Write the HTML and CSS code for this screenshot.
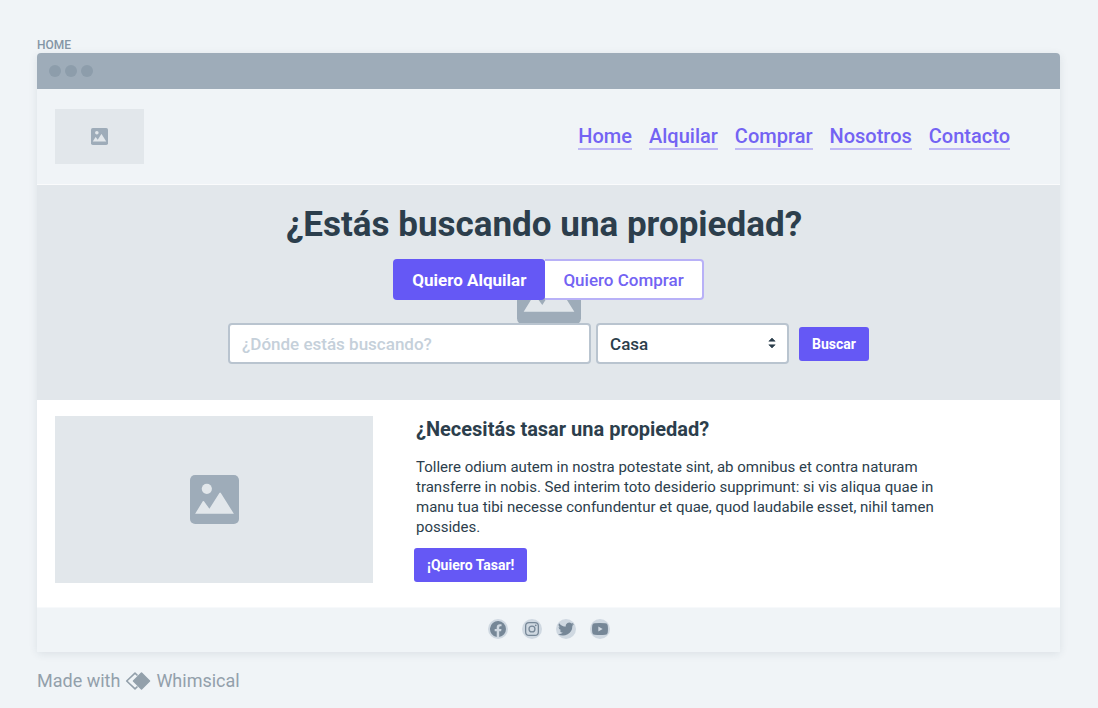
FILE: index.html
```html
<!DOCTYPE html>
<html lang="es">
<head>
<meta charset="utf-8">
<meta name="viewport" content="width=device-width, initial-scale=1">
<title>Home</title>
<link rel="stylesheet" href="styles.css">
</head>
<body>
<svg class="sprite" aria-hidden="true">
  <symbol id="picture" viewBox="0 0 48 48">
    <path fill="#9eacb9" d="M5 0h38a5 5 0 0 1 5 5v38a5 5 0 0 1-5 5H5a5 5 0 0 1-5-5V5a5 5 0 0 1 5-5z"/>
    <circle fill="#e2e7eb" cx="16.500" cy="13.500" r="5"/>
    <path fill="#e2e7eb" d="M5 38l7.500-12.200q.6-.9 1.200 0L19 33l9.800-15.300q.7-1 1.400 0L43 38z"/>
  </symbol>
</svg>
<div class="board">
  <p class="frame-label">HOME</p>
  <div class="browser">
    <div class="titlebar"><span class="dot"></span><span class="dot"></span><span class="dot"></span></div>
    <header class="header">
      <div class="logo"><svg class="logo-icon" aria-hidden="true"><use href="#picture"/></svg></div>
      <nav class="nav">
        <a href="#home">Home</a>
        <a href="#alquilar">Alquilar</a>
        <a href="#comprar">Comprar</a>
        <a href="#nosotros">Nosotros</a>
        <a href="#contacto">Contacto</a>
      </nav>
    </header>
    <main>
      <section class="hero">
        <svg class="hero-icon" aria-hidden="true"><use href="#picture"/></svg>
        <h1 class="hero-title">¿Estás buscando una propiedad?</h1>
        <div class="tabs">
          <button type="button" class="tab tab-active">Quiero Alquilar</button>
          <button type="button" class="tab">Quiero Comprar</button>
        </div>
        <form class="search">
          <input class="field search-input" type="text" placeholder="¿Dónde estás buscando?" aria-label="¿Dónde estás buscando?">
          <div class="select-wrap">
            <select class="field search-select" aria-label="Tipo de propiedad"><option>Casa</option></select>
            <svg class="select-arrows" viewBox="0 0 8 12" aria-hidden="true"><path d="M.8 4.200L4 1l3.200 3.200zM.8 7.800h6.400L4 11z" fill="#2c3e4c" stroke="#2c3e4c" stroke-width=".6" stroke-linejoin="round"/></svg>
          </div>
          <button type="button" class="button">Buscar</button>
        </form>
      </section>
      <section class="appraisal">
        <div class="appraisal-image"><svg class="appraisal-icon" aria-hidden="true"><use href="#picture"/></svg></div>
        <div class="appraisal-body">
          <h2 class="appraisal-title">¿Necesitás tasar una propiedad?</h2>
          <p class="appraisal-text">Tollere odium autem in nostra potestate sint, ab omnibus et contra naturam<br>transferre in nobis. Sed interim toto desiderio supprimunt: si vis aliqua quae in<br>manu tua tibi necesse confundentur et quae, quod laudabile esset, nihil tamen<br>possides.</p>
          <button type="button" class="button">¡Quiero Tasar!</button>
        </div>
      </section>
    </main>
    <footer class="footer">
      <a class="social" href="#facebook" aria-label="Facebook"><svg viewBox="0 0 24 24"><path d="M24 12a12 12 0 1 0-13.900 11.900v-8.400H7V12h3.100V9.400c0-3 1.800-4.700 4.500-4.700 1.300 0 2.700.2 2.700.2v3h-1.500c-1.500 0-2 .9-2 1.900V12h3.400l-.5 3.500h-2.900v8.400A12 12 0 0 0 24 12z"/></svg></a>
      <a class="social" href="#instagram" aria-label="Instagram"><svg class="social-small" viewBox="0 0 24 24"><path fill-rule="evenodd" d="M7 0h10a7 7 0 0 1 7 7v10a7 7 0 0 1-7 7H7a7 7 0 0 1-7-7V7a7 7 0 0 1 7-7zm0 2.200A4.800 4.800 0 0 0 2.200 7v10A4.800 4.800 0 0 0 7 21.800h10a4.800 4.800 0 0 0 4.800-4.800V7A4.800 4.800 0 0 0 17 2.200zM12 5.800a6.200 6.200 0 1 1 0 12.400 6.200 6.200 0 0 1 0-12.400zM12 8a4 4 0 1 0 0 8 4 4 0 0 0 0-8z"/><circle cx="18.400" cy="5.600" r="1.500"/></svg></a>
      <a class="social" href="#twitter" aria-label="Twitter"><svg viewBox="0 0 24 24"><path d="M24 4.600a10 10 0 0 1-2.800.8 5 5 0 0 0 2.100-2.700 10 10 0 0 1-3.100 1.200 4.900 4.900 0 0 0-8.400 4.500A14 14 0 0 1 1.700 3.200a4.900 4.900 0 0 0 1.500 6.500 5 5 0 0 1-2.200-.6 4.900 4.900 0 0 0 3.900 4.900 5 5 0 0 1-2.200.1 4.900 4.900 0 0 0 4.600 3.400A9.900 9.900 0 0 1 0 19.500a14 14 0 0 0 21.500-12.400A10 10 0 0 0 24 4.600z"/></svg></a>
      <a class="social" href="#youtube" aria-label="YouTube"><svg viewBox="0 0 24 24"><path fill-rule="evenodd" d="M4 3.500q8-.8 16 0a3.600 3.600 0 0 1 3.600 3.300q.7 5.200 0 10.400A3.600 3.600 0 0 1 20 20.500q-8 .8-16 0a3.600 3.600 0 0 1-3.600-3.300q-.7-5.200 0-10.400A3.600 3.600 0 0 1 4 3.500zM9.500 8.200v7.600L16 12z"/></svg></a>
    </footer>
  </div>
  <p class="credit">Made with
    <svg class="credit-mark" viewBox="0 0 26 18" aria-hidden="true"><path d="M12.500 3.500L10 1.200 1.700 9l8.300 7.800 2.500-2.300" fill="none" stroke="#93a0ab" stroke-width="1.600" stroke-linejoin="round"/><path d="M16.500 1l8 8-8 8-8-8z" fill="#93a0ab" stroke="#93a0ab" stroke-width="1.500" stroke-linejoin="round"/></svg>
    Whimsical</p>
</div>
</body>
</html>
```
FILE: styles.css
```css
* { box-sizing: border-box; }
body {
  margin: 0;
  background: #f0f4f7;
  color: #2c3e4c;
  font-family: Roboto, "Liberation Sans", sans-serif;
}
h1, h2, p { margin: 0; }
button, input, select { font-family: inherit; }
.sprite { display: none; }
.board { padding: 37px 38px 16px 37px; }
.frame-label {
  font-size: 12px;
  line-height: 16px;
  font-weight: 500;
  color: #8496a5;
}
.browser {
  border-radius: 4px;
  box-shadow: 0 2px 8px rgba(44, 62, 76, 0.1);
}
.titlebar {
  display: flex;
  align-items: center;
  gap: 4px;
  height: 36px;
  padding: 0 12px;
  border-radius: 4px 4px 0 0;
  background: #9eacb9;
}
.dot {
  width: 12px;
  height: 12px;
  border-radius: 50%;
  background: #8d9dab;
}
.header {
  display: flex;
  justify-content: space-between;
  align-items: center;
  padding: 20px 50px 20px 18px;
  background: #f0f4f7;
  border-bottom: 1px solid #fafbfc;
}
.logo {
  display: grid;
  place-items: center;
  width: 89px;
  height: 55px;
  background: #e2e7eb;
}
.logo-icon { width: 17px; height: 17px; }
.nav { display: flex; gap: 17px; }
.nav a {
  font-size: 20px;
  line-height: 24px;
  font-weight: 500;
  color: #7363f3;
  text-decoration: none;
  border-bottom: 2px solid #bfb9f5;
}
.hero {
  position: relative;
  display: flex;
  flex-direction: column;
  align-items: center;
  padding: 18px 0 36px;
  background: #e2e7eb;
}
.hero-icon {
  position: absolute;
  left: 50%;
  top: 50%;
  width: 64px;
  height: 64px;
  margin: -32px;
}
.hero-title {
  position: relative;
  padding-right: 9px;
  font-size: 35px;
  line-height: 44px;
  font-weight: 700;
}
.tabs { position: relative; display: flex; margin-top: 12px; }
.tab {
  height: 41px;
  padding: 0 18px;
  border: 2px solid #b8b1f7;
  border-left: 0;
  border-radius: 0 4px 4px 0;
  background: #fff;
  color: #7363f3;
  font-size: 17px;
  font-weight: 500;
}
.tab-active {
  padding: 0 19px;
  border: 0;
  border-radius: 4px;
  background: #6558f5;
  color: #fff;
  font-weight: 700;
}
.search {
  position: relative;
  display: flex;
  align-items: center;
  margin-top: 23px;
}
.field {
  height: 41px;
  padding: 0 12px;
  border: 2px solid #b9c4cf;
  border-radius: 4px;
  background: #fff;
  color: #2c3e4c;
  font-size: 17px;
  appearance: none;
}
.search-input { width: 363px; font-weight: 500; }
.search-input::placeholder { color: #c5d0da; opacity: 1; }
.select-wrap { position: relative; margin: 0 10px 0 5px; }
.search-select { width: 193px; font-weight: 500; }
.select-arrows {
  position: absolute;
  right: 13px;
  top: 14px;
  width: 8px;
  height: 12px;
  pointer-events: none;
}
.button {
  height: 34px;
  padding: 0 13px;
  border: 0;
  border-radius: 3px;
  background: #6558f5;
  color: #fff;
  font-size: 14px;
  font-weight: 700;
}
.appraisal {
  display: flex;
  gap: 41px;
  padding: 16px 18px 24px;
  background: #fff;
}
.appraisal-image {
  display: grid;
  place-items: center;
  width: 318px;
  height: 167px;
  background: #e2e7eb;
}
.appraisal-icon { width: 49px; height: 49px; }
.appraisal-title {
  padding: 0 2px;
  font-size: 20px;
  line-height: 26px;
  font-weight: 700;
}
.appraisal-text {
  margin: 15px 0 11px;
  padding: 0 2px;
  font-size: 15px;
  line-height: 20px;
}
.footer {
  display: flex;
  justify-content: center;
  gap: 14px;
  padding: 11px 0 13px;
  background: #f0f4f7;
  border-top: 1px solid #f7f9fb;
}
.social {
  display: grid;
  place-items: center;
  width: 20px;
  height: 20px;
  border-radius: 50%;
  background: #cfd8e1;
}
.social svg { width: 16px; height: 16px; fill: #768797; }
.social .social-small { width: 14px; height: 14px; }
.credit {
  display: flex;
  align-items: center;
  gap: 5px;
  margin-top: 17px;
  font-size: 18px;
  line-height: 24px;
  color: #93a0ab;
}
.credit-mark { width: 26px; height: 18px; }
```
